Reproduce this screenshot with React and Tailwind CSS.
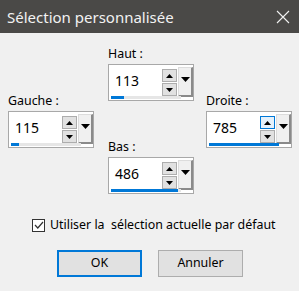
import { useState } from "react";

const font = { fontFamily: '"Noto Sans", "Segoe UI", sans-serif' };

function SpinField({ label, value, fill, hoverUp }) {
  return (
    <div className="flex flex-col">
      <div className="h-4 mb-[2px] text-[12.4px] leading-4 text-[#000]">{label}</div>
      <div className="relative h-[37px] w-[86px] border border-[#a8a8a8] bg-white">
        <span className="absolute left-[6px] top-[6px] text-[14px] leading-5 text-[#000]">{value}</span>

        {/* spin arrows */}
        <div className="absolute left-[53px] top-[4px] flex flex-col gap-[1px]">
          <div
            className={
              "flex h-[13px] w-[15px] items-center justify-center border " +
              (hoverUp ? "border-[#0078d7] bg-[#e5f1fb]" : "border-[#adadad] bg-[#e1e1e1]")
            }
          >
            <svg width="7" height="4" viewBox="0 0 7 4">
              <path d="M0 4 L3.5 0 L7 4 Z" fill="#000" />
            </svg>
          </div>
          <div className="flex h-[13px] w-[15px] items-center justify-center border border-[#adadad] bg-[#e1e1e1]">
            <svg width="7" height="4" viewBox="0 0 7 4">
              <path d="M0 0 L7 0 L3.5 4 Z" fill="#000" />
            </svg>
          </div>
        </div>

        {/* dropdown button */}
        <div className="absolute left-[69px] top-[2px] flex h-[30px] w-[15px] items-start justify-center border-t border-l border-t-[#dcdcdc] border-l-[#dcdcdc] border-r-2 border-b-2 border-r-[#8a8a8a] border-b-[#8a8a8a] bg-[#f0f0f0] pt-[9px]">
          <svg width="9" height="5" viewBox="0 0 9 5">
            <path d="M0 0 L9 0 L4.5 5 Z" fill="#000" />
          </svg>
        </div>

        {/* progress */}
        <div className="absolute left-[2px] bottom-[1px] h-[3px] w-[70px] bg-[#e6e6e6]">
          <div className="h-full bg-[#0078d7]" style={{ width: fill }} />
        </div>
      </div>
    </div>
  );
}

export default function App() {
  const [useDefault, setUseDefault] = useState(true);

  return (
    <div className="h-[291px] w-[299px] overflow-hidden bg-[#f0f0f0]" style={font}>
      {/* Title bar */}
      <div className="flex h-[33px] items-center justify-between bg-[#4a4947] pl-[7px] pr-[9px]">
        <span className="text-[15px] leading-5 text-[#f2f2f2]">Sélection personnalisée</span>
        <svg width="14" height="14" viewBox="0 0 14 14">
          <path d="M1 1 L13 13 M13 1 L1 13" stroke="#f2f2f2" strokeWidth="1.1" />
        </svg>
      </div>

      {/* Fields */}
      <div className="flex pl-[8px]">
        <div className="pt-[60px]">
          <SpinField label="Gauche :" value="115" fill={8} />
        </div>
        <div className="ml-[14px] flex flex-col pt-[13px]">
          <SpinField label="Haut :" value="113" fill={13} />
          <div className="mt-[38px]">
            <SpinField label="Bas :" value="486" fill={67} />
          </div>
        </div>
        <div className="ml-[12px] pt-[60px]">
          <SpinField label="Droite :" value="785" fill={70} hoverUp />
        </div>
      </div>

      {/* Checkbox */}
      <label className="ml-[32px] mt-[23px] flex items-center gap-[5px] text-[12.4px] leading-4 text-[#000]">
        <span
          onClick={() => setUseDefault(!useDefault)}
          className="flex h-[13px] w-[13px] items-center justify-center border border-[#333] bg-white"
        >
          {useDefault && (
            <svg width="10" height="8" viewBox="0 0 10 8">
              <path d="M1 4 L3.8 7 L9 1" stroke="#333" strokeWidth="1.2" fill="none" />
            </svg>
          )}
        </span>
        <span className="whitespace-pre">Utiliser la  sélection actuelle par défaut</span>
      </label>

      {/* Buttons */}
      <div className="ml-[57px] mt-[17px] flex gap-[16px]">
        <button className="h-[27px] w-[85px] border-2 border-[#0078d7] bg-[#e1e1e1] text-[12.4px] text-[#000]">
          OK
        </button>
        <button className="h-[27px] w-[85px] border border-[#adadad] bg-[#e1e1e1] text-[12.4px] text-[#000]">
          Annuler
        </button>
      </div>
    </div>
  );
}
